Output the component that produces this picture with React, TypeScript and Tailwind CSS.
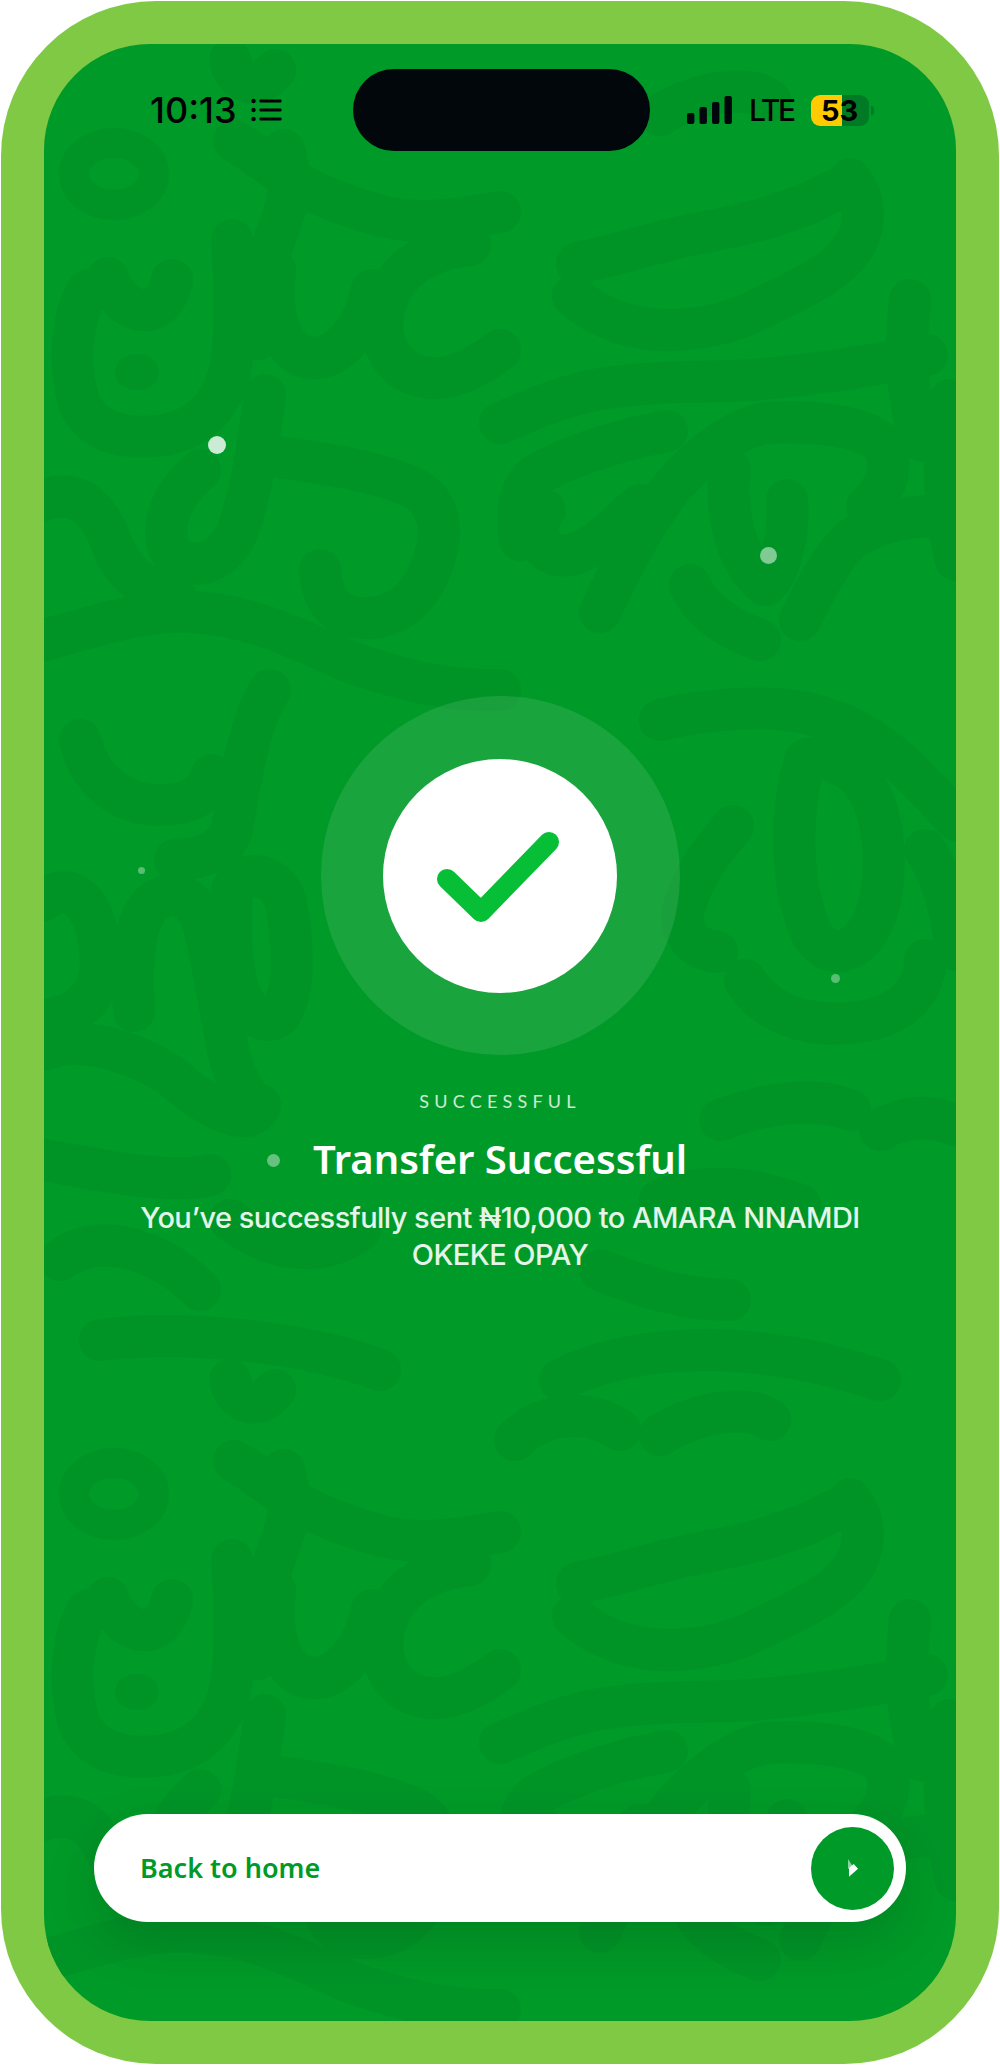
const top = [
  "M234,141 C250,150 262,160 277,170 C300,186 320,196 344,204 C370,214 395,221 421,221 C450,221 475,216 500,212",
  "M284,150 C292,180 290,195 284,212 C278,232 272,244 270,254 C262,290 258,315 257,339",
  "M275,270 C268,320 285,355 310,358 C335,360 362,335 372,290",
  "M470,245 C425,250 395,270 385,305 C375,345 395,375 430,378 C455,380 480,365 500,350",
  "M88,290 C70,320 68,370 80,405 C95,435 130,440 165,435 C200,428 225,405 232,360 C236,320 235,280 232,240",
  "M108,278 C118,310 160,330 172,280",
  "M265,395 C258,440 255,480 238,530 C225,560 200,570 180,560 C158,548 160,505 200,470",
  "M270,456 C320,462 370,470 410,486 C440,500 445,530 432,565 C420,600 395,620 360,618 C335,616 322,600 320,570",
  "M44,640 C100,625 140,610 190,612 C250,614 300,640 350,662 C400,680 450,692 500,690",
  "M44,500 C70,490 95,500 110,540 C125,580 150,590 175,596",
  "M577,263 C620,255 660,240 700,233 C750,224 800,210 833,191",
  "M573,296 C600,320 635,330 667,330 C705,330 740,320 767,305 C810,285 850,265 860,233 C866,210 862,195 850,179",
  "M500,423 C530,410 565,395 600,389 C640,382 690,382 733,381 C790,378 860,368 927,355",
  "M520,540 C515,510 520,490 533,477 C570,455 620,440 667,431",
  "M600,612 C620,570 645,520 673,486 C700,455 735,428 767,423 C810,420 860,425 883,444 C895,470 885,490 867,507",
  "M730,470 C725,510 735,560 765,585 C780,575 790,530 787,500",
  "M545,510 C530,530 540,560 570,555 C600,548 620,520 640,505",
  "M690,585 C700,610 730,630 760,640",
  "M800,620 C815,590 830,560 850,540 C880,520 910,515 956,515",
  "M910,300 C905,340 905,390 920,440",
  "M950,400 C940,450 945,520 956,560",
  "M515,120 C545,90 590,90 620,110",
  "M660,115 C700,90 750,85 770,100",
  "M230,60 C235,85 260,90 275,70",
];
const mid = [
  "M134,1011 C130,960 135,915 154,902 C170,890 195,890 205,930 C215,975 220,1010 228,1050 C232,1070 238,1080 244,1090",
  "M232,890 C240,870 275,870 285,900 C295,950 295,990 280,1015 C262,1030 240,1010 234,970 C230,940 230,910 232,890",
  "M44,900 C70,880 95,900 100,950 C105,990 85,1015 44,1020",
  "M80,740 C90,780 120,805 160,805 C185,805 205,798 212,775",
  "M270,690 C250,720 240,780 232,830 C225,850 200,860 175,860",
  "M44,1050 C80,1035 130,1050 170,1075 C210,1110 250,1130 260,1105",
  "M44,1160 C100,1170 170,1185 210,1175",
  "M733,826 C715,850 700,860 683,910 C680,935 695,950 717,952",
  "M805,760 C790,810 790,880 810,930 C830,970 870,950 880,900 C890,850 880,790 850,770 C835,760 815,755 805,760",
  "M925,850 C945,880 950,910 956,950",
  "M745,980 C770,1020 820,1030 870,1020 C910,1010 925,985 925,960",
  "M720,1120 C760,1105 810,1095 850,1110",
  "M880,1130 C905,1115 930,1115 956,1125",
  "M660,720 C700,710 780,700 830,720 C880,735 920,780 956,820",
  "M660,1200 C710,1180 760,1190 800,1205",
  "M600,1270 C650,1290 690,1300 730,1300",
  "M60,1260 C100,1230 160,1250 200,1290",
  "M230,1220 C270,1250 320,1260 360,1230",
  "M100,1340 C180,1330 300,1340 380,1370",
  "M560,1380 C640,1340 760,1340 880,1380",
];
const dots: [number, number, number, string][] = [
  [217, 445, 9, "bg-white/80"],
  [768, 555, 8.5, "bg-white/50"],
  [141, 870, 3.5, "bg-white/35"],
  [835, 978, 4.5, "bg-white/35"],
  [273, 1160, 6.5, "bg-white/40"],
];

function Tile() {
  return (
    <>
      <ellipse cx="114" cy="174" rx="40" ry="31" strokeWidth="30" />
      <ellipse cx="137" cy="372" rx="22" ry="18" fill="#009427" stroke="none" />
      {top.map((d) => <path key={d} d={d} />)}
    </>
  );
}

function Pattern() {
  return (
    <svg className="absolute left-[-44px] top-[-44px]" width="1000" height="2065" viewBox="0 0 1000 2065" fill="none" stroke="#009427" strokeWidth="42" strokeLinecap="round" strokeLinejoin="round">
      <g>
        <Tile />
      </g>
      <g transform="translate(0 1320)">
        <Tile />
      </g>
      {mid.map((d) => <path key={d} d={d} />)}
    </svg>
  );
}

export default function App() {
  return (
    <div className="h-[2065px] w-[1000px] bg-white p-px">
      <div className="h-full rounded-[155px] bg-[#80c944] p-[43px]">
        <div className="relative flex h-full flex-col overflow-hidden rounded-[106px] bg-[#009a28] font-['Noto_Sans',sans-serif]">
          <Pattern />
          {dots.map(([x, y, r, c]) => (
            <span
              key={x}
              className={`absolute rounded-full ${c}`}
              style={{ left: x - r - 44, top: y - r - 44, width: r * 2, height: r * 2 }}
            />
          ))}

          <div className="relative flex items-center pl-[106px] pt-[25px] text-black">
            <div className="flex w-[203px] items-center font-['Inter',sans-serif]">
              <span className="text-[36px] leading-[82px] font-medium">10:13</span>
              <svg className="ml-[14px]" width="31" height="24" viewBox="0 0 31 24" fill="#000">
                <circle cx="2.5" cy="3" r="2.2" />
                <circle cx="2.5" cy="12" r="2.2" />
                <circle cx="2.5" cy="21" r="2.2" />
                <rect x="8.5" y="1.5" width="22" height="3" rx="1" />
                <rect x="8.5" y="10.5" width="22" height="3" rx="1" />
                <rect x="8.5" y="19.5" width="22" height="3" rx="1" />
              </svg>
            </div>
            <div className="h-[82px] w-[297px] rounded-[41px] bg-[#01070a]" />
            <div className="ml-[37px] flex items-center font-['Inter',sans-serif]">
              <svg width="46" height="29" viewBox="0 0 46 29" fill="#01070a">
                <rect x="0" y="17" width="7.4" height="11" rx="2" />
                <rect x="12.5" y="11" width="7.4" height="17" rx="2" />
                <rect x="25" y="6" width="7.4" height="22" rx="2" />
                <rect x="37.5" y="0" width="7.4" height="28" rx="2" />
              </svg>
              <span className="ml-[16px] text-[30px] leading-[30px] font-medium tracking-[-2.4px]">LTE</span>
              <div className="relative ml-[17px] flex h-[31px] w-[58px] rounded-[9px] bg-[#007a25]">
                <div className="h-full w-[31px] rounded-l-[9px] bg-[#ffcb00]" />
                <span className="absolute inset-0 text-center text-[29px] leading-[31px] font-bold">53</span>
              </div>
              <div className="ml-[2px] h-[9px] w-[3px] rounded-r-sm bg-[#007a25]" />
            </div>
          </div>

          <div className="relative mt-[545px] flex flex-col items-center text-white">
            <div className="flex size-[359px] items-center justify-center rounded-full bg-white/10">
              <div className="flex size-[234px] items-center justify-center rounded-full bg-white">
                <svg className="mr-[7px]" width="124" height="92" viewBox="0 0 124 92" fill="none" stroke="#06bf36" strokeWidth="20" strokeLinecap="round" strokeLinejoin="round">
                  <path d="M12,49 L46,82 L114,12" />
                </svg>
              </div>
            </div>
            <p className="mt-[36px] font-['Lato',sans-serif] text-[18px] leading-[20px] tracking-[5.2px] text-white/80">SUCCESSFUL</p>
            <h1 className="mt-[24px] text-[40px] leading-[48px] font-semibold">Transfer Successful</h1>
            <p className="mt-[16px] w-[740px] text-center font-['Inter',sans-serif] text-[29px] leading-[37px] font-medium tracking-[-0.55px] text-white/90">
              You’ve successfully sent ₦10,000 to AMARA NNAMDI OKEKE OPAY
            </p>
          </div>

          <div className="relative mx-[50px] mt-auto mb-[99px] flex h-[108px] items-center justify-between rounded-full bg-white pr-[12px] pl-[46px] shadow-[0_20px_50px_rgba(0,40,10,0.18)]">
            <span className="text-[27px] font-semibold text-[#009a28]">Back to home</span>
            <div className="flex size-[83px] items-center justify-center rounded-full bg-[#009a28]">
              <svg width="10" height="18" viewBox="0 0 10 18">
                <polygon points="0,0 4.5,7 0,10" fill="#ffffff" fillOpacity="0.55" />
                <polygon points="1,9 5.7,5 10,9.7 1,17.7" fill="#ffffff" />
              </svg>
            </div>
          </div>
        </div>
      </div>
    </div>
  );
}
